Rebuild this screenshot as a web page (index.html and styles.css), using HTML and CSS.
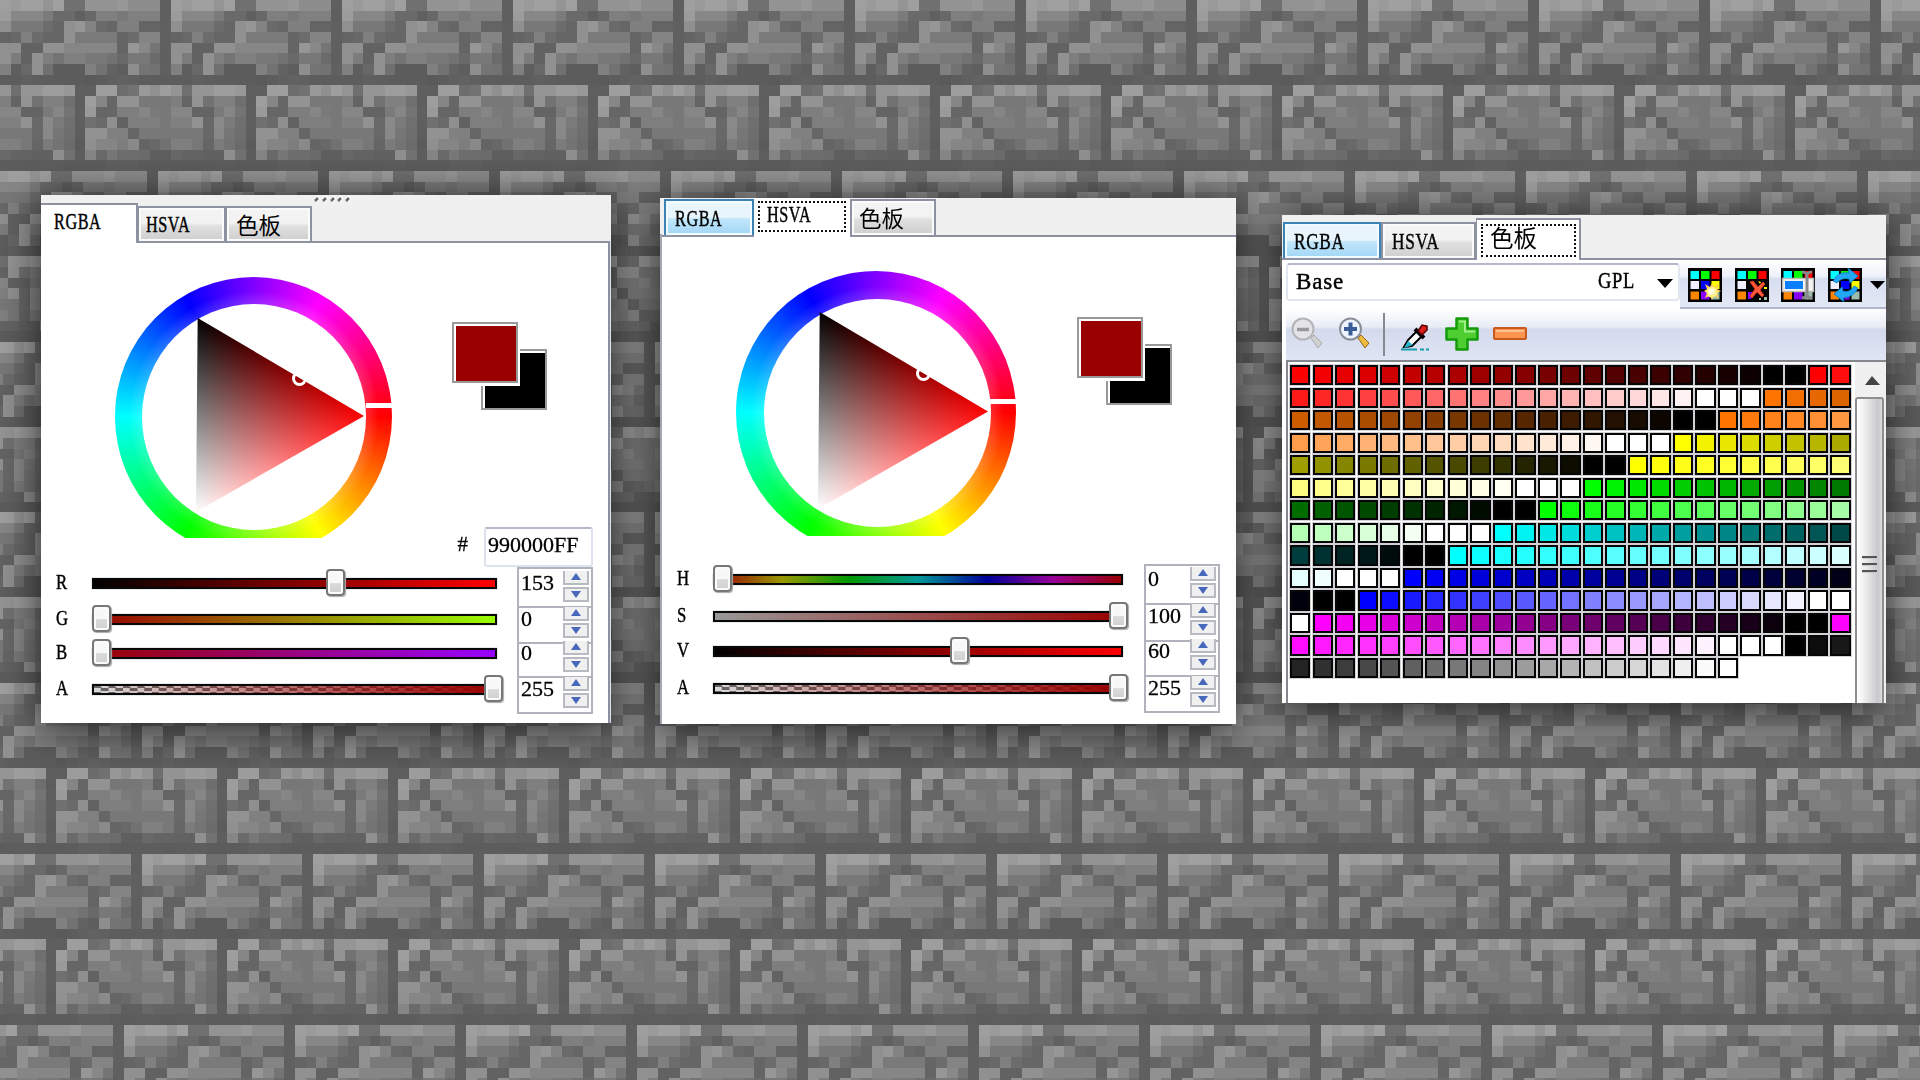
FILE: index.html
```html
<!DOCTYPE html>
<html lang="zh">
<head>
<meta charset="utf-8">
<title>RGBA / HSVA / 色板</title>
<link rel="stylesheet" href="styles.css">
</head>
<body>
<canvas class="wall" width="1920" height="1080"></canvas>

<section class="panel panel-rgba">
  <nav class="tabs">
    <div class="tab active first"><span class="latin">RGBA</span></div>
    <div class="tab"><span class="latin">HSVA</span></div>
    <div class="tab last"><span class="cjk">色板</span></div>
    <svg class="grip" width="38" height="8" viewBox="0 0 38 8"><path d="M2 5l3-3M10 5l3-3M18 5l3-3M25 5l3-3M33 5l3-3" stroke="#fff" stroke-width="4"/><path d="M1 6l3-3M9 6l3-3M17 6l3-3M24 6l3-3M32 6l3-3" stroke="#666" stroke-width="2.500"/></svg>
  </nav>
  <div class="stage">
    <div class="wheel"><div class="ring"></div><div class="hole"></div><div class="triangle"></div><div class="bar"></div><div class="marker"></div></div>
    <div class="side">
      <div class="pair"><div class="sw back"></div><div class="sw front"></div></div>
      <div class="hex"><span class="num hash">#</span><div class="field"><span class="num">990000FF</span></div></div>
    </div>
  </div>
  <div class="rows">
    <div class="row r1"><span class="name">R</span><div class="slider"><div class="track t-red"></div><i class="thumb" style="left:234px"></i></div><div class="spin"><span class="num">153</span><div class="btns"><b></b><b class="dn"></b></div></div></div>
    <div class="row r2"><span class="name">G</span><div class="slider"><div class="track t-green"></div><i class="thumb" style="left:0"></i></div><div class="spin"><span class="num">0</span><div class="btns"><b></b><b class="dn"></b></div></div></div>
    <div class="row r3"><span class="name">B</span><div class="slider"><div class="track t-blue"></div><i class="thumb" style="left:0"></i></div><div class="spin"><span class="num">0</span><div class="btns"><b></b><b class="dn"></b></div></div></div>
    <div class="row r4"><span class="name">A</span><div class="slider"><div class="track t-alpha"></div><i class="thumb" style="left:392px"></i></div><div class="spin"><span class="num">255</span><div class="btns"><b></b><b class="dn"></b></div></div></div>
  </div>
</section>

<section class="panel panel-hsva">
  <nav class="tabs">
    <div class="tab hot"><span class="latin">RGBA</span></div>
    <div class="tab active"><div class="focus"><span class="latin">HSVA</span></div></div>
    <div class="tab last"><span class="cjk">色板</span></div>
  </nav>
  <div class="stage">
    <div class="wheel"><div class="ring"></div><div class="hole"></div><div class="triangle"></div><div class="bar"></div><div class="marker"></div></div>
    <div class="side">
      <div class="pair"><div class="sw back"></div><div class="sw front"></div></div>
    </div>
  </div>
  <div class="rows">
    <div class="row r1"><span class="name">H</span><div class="slider"><div class="track t-hue"></div><i class="thumb" style="left:0"></i></div><div class="spin"><span class="num">0</span><div class="btns"><b></b><b class="dn"></b></div></div></div>
    <div class="row r2"><span class="name">S</span><div class="slider"><div class="track t-sat"></div><i class="thumb" style="left:396px"></i></div><div class="spin"><span class="num">100</span><div class="btns"><b></b><b class="dn"></b></div></div></div>
    <div class="row r3"><span class="name">V</span><div class="slider"><div class="track t-red"></div><i class="thumb" style="left:237px"></i></div><div class="spin"><span class="num">60</span><div class="btns"><b></b><b class="dn"></b></div></div></div>
    <div class="row r4"><span class="name">A</span><div class="slider"><div class="track t-alpha"></div><i class="thumb" style="left:396px"></i></div><div class="spin"><span class="num">255</span><div class="btns"><b></b><b class="dn"></b></div></div></div>
  </div>
</section>

<section class="panel panel-palette">
  <nav class="tabs">
    <div class="tab hot"><span class="latin">RGBA</span></div>
    <div class="tab"><span class="latin">HSVA</span></div>
    <div class="tab active"><div class="focus"><span class="cjk">色板</span></div></div>
  </nav>
  <svg width="0" height="0" class="defs">
    <defs>
      <g id="grid">
        <rect width="34" height="34" fill="#000"/>
        <rect x="2.500" y="3" width="8.500" height="8" fill="#0ff"/><rect x="13" y="3" width="8.500" height="8" fill="#0f0"/><rect x="23.500" y="3" width="8" height="8" fill="#f00"/>
        <rect x="2.500" y="13" width="8.500" height="8" fill="#eef"/><rect x="13" y="13" width="8.500" height="8" fill="#00f"/><rect x="23.500" y="13" width="8" height="8" fill="#ff0"/>
        <rect x="2.500" y="23.500" width="8.500" height="8" fill="#ff8400"/><rect x="13" y="23.500" width="8.500" height="8" fill="#80f"/><rect x="23.500" y="23.500" width="8" height="8" fill="#9cbcae"/>
      </g>
    </defs>
  </svg>
  <div class="picker">
    <div class="combo"><span class="base">Base</span><span class="latin gpl">GPL</span><svg width="16" height="9" viewBox="0 0 16 9"><path d="M0 0h16L8 9z"/></svg></div>
    <div class="actions">
      <svg width="34" height="34" viewBox="0 0 34 34"><use href="#grid"/><path d="M24 15l2 4 5-3-2 5 4 2-4 2 2 5-5-2-2 4-2-4-5 2 2-5-3-2 3-2-2-5 5 3z" fill="#fc5"/><circle cx="24" cy="24" r="5.500" fill="#fff08a"/><circle cx="23.500" cy="23.500" r="3" fill="#fffde0"/></svg>
      <svg width="34" height="34" viewBox="0 0 34 34"><use href="#grid"/><path d="M13 12h19v21H13z"/><path d="M23 13l3 1-1 2zM29 19h3v2h-3z" fill="#ff0"/><path d="M24 30h2v2h-2zM29 29h3v3h-3z" fill="#9cbcae"/><path d="M13 24l4 0-1 7h-3z" fill="#80f"/><path d="M15 14l3-1 5 6 5-5 2 2-5 6 4 5-2 2-5-5-5 6-2-2 5-7z" fill="#ff5a3c" stroke="#d03018"/></svg>
      <svg width="34" height="34" viewBox="0 0 34 34"><use href="#grid"/><path d="M1.500 10.500h31v13h-31z" fill="#f4f4f4" stroke="#bbb" stroke-width="1.500"/><path d="M4 13h18v8H4z" fill="#0a80ff"/><path d="M21 4q3.500 0 5 2 1.500-2 5-2M26 6v22M21 30q3.500 0 5-2 1.500 2 5 2" fill="none" stroke="#888" stroke-width="3"/></svg>
      <svg width="34" height="34" viewBox="0 0 34 34"><use href="#grid"/><path d="M5 13Q10 3 21 5l-1-5 10 8-8 7-1-4q-7-2-12 4zM30 20q-4 9-15 10l1 4-10-8 8-7 1 4q7 2 11-5z" fill="#22a8f4" stroke="#087ac4" stroke-width=".8"/></svg>
      <svg class="drop" width="15" height="8" viewBox="0 0 15 8"><path d="M0 0h15L7.500 8z"/></svg>
    </div>
  </div>
  <div class="toolbar">
    <svg class="i1" width="32" height="32" viewBox="0 0 32 32"><path d="M20 21l3-3 8 8-4 5z" fill="#d0d0d0" stroke="#aaa"/><circle cx="12" cy="12" r="10.500" fill="#e4e4e8" stroke="#b4b4b8" stroke-width="2"/><path d="M6 12.500h12" stroke="#999" stroke-width="3.500"/></svg>
    <svg class="i2" width="32" height="32" viewBox="0 0 32 32"><path d="M20 21l3-3 8 8-4 5z" fill="#edbd3c" stroke="#98661c"/><circle cx="12.500" cy="12" r="10.500" fill="#eef4ff" stroke="#8a8e96" stroke-width="2"/><path d="M6 12h13M12.500 5.500v13" stroke="#3c5c98" stroke-width="4"/></svg>
    <div class="sep"></div>
    <svg class="i3" width="30" height="28" viewBox="0 0 30 28"><path d="M3 24L7 17 16 8l5 5-10 10z" fill="#fff" stroke="#000" stroke-width="2"/><path d="M3 25l4-7 5 4z" fill="#28b4cc"/><path d="M14 6l9 9" stroke="#000" stroke-width="4"/><path d="M17 8l4-6 5 1 0 4-5 5z" fill="#d91c1c" stroke="#500" stroke-width="1.500"/><path d="M0 26.500h16M19 26.500h4M25 26.500h3" stroke="#189cae" stroke-width="2"/></svg>
    <svg class="i4" width="34" height="34" viewBox="0 0 34 34"><path d="M11.500 1.500h11v10h10v11h-10v10h-11v-10h-10v-11h10z" fill="#4fce32" stroke="#159a0c" stroke-width="2.500" stroke-linejoin="round"/><path d="M14 4.500h6v10h10" fill="none" stroke="#a0ee88" stroke-width="2"/></svg>
    <svg class="i5" width="34" height="13" viewBox="0 0 34 13"><rect x="1" y="1" width="32" height="11" rx="1" fill="#ff9350" stroke="#c55a1c" stroke-width="2"/><path d="M3 4h28" stroke="#ffc090" stroke-width="2"/></svg>
  </div>
  <div class="list">
    <div class="cells"></div>
    <div class="scroll">
      <svg width="15" height="9" viewBox="0 0 15 9"><path d="M0 9l7-9 8 9z" fill="#444"/></svg>
      <div class="sthumb"><i></i><i></i><i></i></div>
    </div>
  </div>
</section>
<script src="main.js"></script>
</body>
</html>
```
FILE: styles.css
```css
* { box-sizing: border-box; }
body { margin: 0; width: 1920px; height: 1080px; overflow: hidden; position: relative; background: #6b6b6b; font-family: "Liberation Serif", "Noto Sans CJK SC", serif; color: #000; }
.wall { display: block; }
.defs { position: absolute; }

/* floating windows */
.panel { position: absolute; background: #fff; box-shadow: 0 5px 40px rgba(0,0,0,.7); }
.panel-rgba { left: 41px; top: 195px; width: 570px; height: 528px; }
.panel-hsva { left: 660px; top: 198px; width: 576px; height: 526px; }
.panel-palette { left: 1282px; top: 215px; width: 604px; height: 488px; }
.panel-rgba::after { content: ""; position: absolute; right: 0; top: 46px; bottom: 0; width: 3px; background: linear-gradient(90deg, #8e92a0 66%, #dde2ec 66%); }
.panel-hsva::after { content: ""; position: absolute; left: 0; top: 36px; bottom: 0; width: 2px; background: #a4a8b4; }

/* text */
.latin, .name, .num, .base { display: inline-block; white-space: nowrap; line-height: 1; transform-origin: 0 50%; -webkit-text-stroke: .45px #000; }
.latin { font-size: 22.5px; letter-spacing: .8px; transform: scaleX(.72); width: 46px; }
.cjk { font: 22.5px/1 "Noto Sans CJK SC", sans-serif; white-space: nowrap; }
.name { font-size: 22px; transform: scaleX(.76); width: 14px; }
.num { font-size: 22px; -webkit-text-stroke-width: .3px; }
.base { font-size: 23px; letter-spacing: .8px; }

/* tabs */
.tabs { display: flex; align-items: flex-end; background: #f0f0f0; border-bottom: 2px solid #8e92a0; }
.tab { border: 2px solid #8e92a0; border-bottom: 0; background: linear-gradient(#f3f3f3 0 45%, #dfdfdf 55%, #cecece); box-shadow: inset 0 0 0 2px #fbfbfb; }
.tab.hot { background: linear-gradient(#e8f5fd 0 48%, #c2e6fa 52%, #a0d6f6); border-color: #3c82b4; box-shadow: inset 0 0 0 2px #f2fbff; }
.tab.active { background: #fff; box-shadow: none; margin-bottom: -2px; }
.focus { border: 2px dotted #111; }

.panel-rgba .tabs { height: 48px; position: relative; }
.panel-rgba .tab { width: 89px; height: 35px; padding: 6px 0 0 7px; margin-left: -1px; }
.panel-rgba .tab.first { width: 97px; height: 40px; border-left: 0; padding: 6px 0 0 13px; margin-left: 0; }
.panel-rgba .tab.last { width: 87px; padding: 5px 0 0 9px; }
.panel-rgba .cjk, .panel-hsva .cjk { display: block; }
.grip { position: absolute; left: 273px; top: 0; }

.panel-hsva .tabs { height: 39px; padding-left: 4px; }
.panel-hsva .tab { width: 90px; height: 36px; padding: 7px 0 0 9px; }
.panel-hsva .tab.active { width: 96px; height: 39px; border: 0; padding: 3px 4px 0 4px; }
.panel-hsva .focus { width: 88px; height: 31px; padding: 1px 0 0 7px; }
.panel-hsva .tab.last { width: 86px; padding: 5px 0 0 7px; }

.panel-palette .tabs { height: 45px; padding-left: 1px; }
.panel-palette .latin { transform: scaleX(.77); }
.panel-palette .tab { width: 98px; height: 36px; padding: 7px 0 0 9px; }
.panel-palette .tab:nth-child(2) { width: 95px; padding-left: 9px; }
.panel-palette .tab.active { width: 105px; height: 42px; border-left-width: 1px; padding: 4px 0 0 4px; }
.panel-palette .focus { width: 95px; height: 33px; padding: 0 0 0 7px; line-height: 23px; }
.panel-palette .cjk { font-size: 23.5px; }

/* colour wheel */
.stage { display: flex; }
.panel-rgba .stage { height: 324px; padding: 34px 0 0 74px; --rw: 277px; --rh: 279px; --hx: 27px; --hy: 27px; --hw: 224px; --hh: 226px; --tx: 81px; --ty: 41px; --tw: 168px; --th: 194px; --mx: 177px; --my: 94px; --bx: 251px; --by: 126px; }
.panel-hsva .stage { height: 327px; padding: 34px 0 0 76px; --rw: 280px; --rh: 283px; --hx: 27.5px; --hy: 28px; --hw: 227px; --hh: 228px; --tx: 82px; --ty: 41px; --tw: 170px; --th: 197px; --mx: 180px; --my: 95px; --bx: 254px; --by: 128px; }
.wheel { position: relative; overflow: hidden; width: var(--rw); flex: none; }
.panel-rgba .wheel { height: 261px; }
.panel-hsva .wheel { height: 265px; }
.ring { width: var(--rw); height: var(--rh); border-radius: 50%; background: conic-gradient(from 90deg, red, #ff0, lime, cyan, blue, #f0f, red); }
.hole { position: absolute; left: var(--hx); top: var(--hy); width: var(--hw); height: var(--hh); border-radius: 50%; background: #fff; }
.ring::after { content: ""; position: absolute; left: calc(var(--hx) - 13px); top: calc(var(--hy) - 13px); width: calc(var(--hw) + 26px); height: calc(var(--hh) + 26px); border-radius: 50%; background: radial-gradient(closest-side, rgba(255,255,255,.18) 88%, rgba(255,255,255,0)); }
.triangle { position: absolute; left: var(--tx); top: var(--ty); width: var(--tw); height: var(--th); clip-path: polygon(1% 0, 100% 50.5%, 0 100%); background: linear-gradient(150deg, #000, #f00 67%), linear-gradient(210deg, #000 33%, #0ff); background-blend-mode: screen; }
.marker { position: absolute; left: var(--mx); top: var(--my); width: 15px; height: 15px; border: 3px solid #fff; border-radius: 50%; }
.bar { position: absolute; left: var(--bx); top: var(--by); width: 27px; height: 5px; background: #fff; }

/* swatches and hex value */
.side { display: flex; flex-direction: column; flex: 1; }
.panel-rgba .side { padding: 45px 18px 0 60px; }
.panel-hsva .side { padding: 46px 0 0 61px; }
.pair { position: relative; width: 95px; height: 88px; }
.sw { position: absolute; width: 66px; height: 61px; border: 2px solid #999; padding: 2px 0 0 2px; background-clip: content-box; }
.front { left: 0; top: 0; background-color: #900; box-shadow: inset 2px 2px 0 #fff, 2px 3px 0 #fff; }
.back { left: 29px; top: 27px; background-color: #000; }
.hex { display: flex; justify-content: flex-end; gap: 16px; margin-top: auto; }
.hash { margin-top: 7px; font-size: 21px; }
.field { width: 109px; height: 40px; border: 2px solid #dde3ee; border-top-color: #b4b8c4; border-radius: 3px; padding: 5px 0 0 2px; }

/* channel rows */
.row { display: flex; align-items: flex-start; }
.panel-rgba .row { padding-left: 15px; }
.panel-hsva .row { padding-left: 17px; }
.name { margin: calc(var(--c) - 12px) 22px 0 0; }
.slider { position: relative; margin-top: calc(var(--c) - 5px); height: 10px; }
.panel-rgba .slider { width: 405px; margin-right: 20px; }
.panel-hsva .slider { width: 410px; margin-right: 21px; }
.r1 { --c: 16px; --h: 39px; }
.r2 { --c: 13px; --h: 36px; }
.r3 { --c: 11px; --h: 34px; }
.r4 { --c: 13px; --h: 37px; }
.panel-hsva .r1 { --c: 15px; }
.panel-hsva .r2 { --c: 13px; --h: 37px; }
.panel-hsva .r3 { --h: 35px; }
.panel-hsva .rows { padding-top: 0; }
.track { height: 11px; border: 2.5px solid #080808; box-shadow: 0 0 1px #789; background-origin: border-box; }
.thumb { position: absolute; top: -9px; width: 19px; height: 27px; border: 2px solid #777; border-radius: 4px; background: linear-gradient(#f8f8f8 0 50%, #dadada 55%, #d0d0d0); box-shadow: inset 0 0 0 2px #fbfbfb, 1px 1px 1px #aaa; }
.t-red { background-image: linear-gradient(90deg, #000, #f00); }
.t-green { background-image: linear-gradient(90deg, #900, #9f0); }
.t-blue { background-image: linear-gradient(90deg, #900, #90f); }
.t-sat { background-image: linear-gradient(90deg, #999, #900); }
.t-hue { background-image: linear-gradient(90deg, #900, #990 17%, #090 33%, #099 50%, #009 67%, #909 83%, #900); }
.t-alpha { background: linear-gradient(90deg, rgba(153,0,0,0), #900), conic-gradient(#666 25%, #d8d8d8 0 50%, #666 0 75%, #d8d8d8 0) 0 2px / 14.500px 7px; }
.spin { display: flex; justify-content: space-between; width: 76px; height: var(--h); border: 2px solid #b0b2bc; border-bottom: 0; padding: 0 2px 0 2px; }
.r4 .spin { border-bottom: 2px solid #b0b2bc; height: 38px; }
.spin .num { margin-top: calc(var(--c) - 13.5px); }
.btns { margin-top: calc(var(--c) - 14px); width: 26px; height: 31px; display: flex; flex-direction: column; gap: 2px; }
.btns b { flex: 1; border: 2px solid #b8bac2; border-top: 0; background: #f0f0f0; display: flex; align-items: center; justify-content: center; }
.btns .dn { border-top: 2px solid #b8bac2; }
.btns b::after { content: ""; border: 5px solid transparent; border-top: 0; border-bottom: 7px solid #4868bc; }
.btns .dn::after { transform: rotate(180deg); }

/* palette picker */
.picker { display: flex; height: 49px; }
.combo { width: 395px; height: 38px; margin: 3px 0 0 4px; border: 2px solid #e2e6ef; border-top-color: #b4b8c8; border-radius: 4px; display: flex; align-items: center; padding: 0 5px 1px 8px; }
.combo .gpl { margin-left: auto; width: 46px; transform: scaleX(.82); margin-right: 13px; }
.combo svg { margin-top: 4px; }
.actions { flex: 1; display: flex; gap: 12.500px; padding: 8px 1px 0 8px; background: linear-gradient(#fff, #eef1f8 35%, #d7def0 40%, #e3e8f5); border-bottom: 2px solid #b2b6cc; }
.actions svg { flex: none; }
.drop { margin: 13px 0 0 -4px; }
.toolbar { display: flex; height: 51px; margin-left: 4px; background: linear-gradient(#fff, #e8ecf5 35%, #d3daec 40%, #e0e5f4); }
.i1 { margin: 8px 0 0 5px; }
.i2 { margin: 8px 0 0 15px; }
.sep { width: 2px; height: 43px; margin: 4px 16px 0 13px; background: #888a92; }
.i3 { margin-top: 14px; }
.i4 { margin: 8px 0 0 14px; }
.i5 { margin: 18px 0 0 14px; }
.list { display: flex; height: 343px; margin-left: 4px; border: 2px solid #85878c; border-right: 0; border-bottom: 0; }
.cells { display: grid; grid-template-columns: repeat(25, 20.400px); grid-auto-rows: 20.400px; gap: 2.130px; align-content: start; padding: 3px 0 0 2px; width: 567px; }
.cells i { border: 2.500px solid #060606; box-shadow: 0 0 0 1px #d2d2d6; }
.scroll { width: 31px; background: #f0f0f0; display: flex; flex-direction: column; }
.scroll svg { margin: 14px 0 0 10px; flex: none; }
.sthumb { flex: 1; margin: 12px 2px 0 0; border: 2px solid #8e8e92; border-bottom: 0; border-radius: 3px 3px 0 0; background: linear-gradient(90deg, #fff, #eee 30%, #c8c8cc 85%, #ddd); display: flex; flex-direction: column; gap: 4px; padding: 157px 0 0 5px; }
.sthumb i { width: 15px; height: 3px; background: #555; border-bottom: 1px solid #ccc; }
```
FILE: main.js
```js
// Stone brick texture: 16 x 16 grey levels, two hex digits each.
const stone = [
  "9f9aa0a0949f7070939393988d8d8d5f",
  "9c8787877b6a6a60687f7f798080805f",
  "907878786c669096836a667f7f646460",
  "6468806c6666917a7a7a7a656c848460",
  "90906262919186868686866496887560",
  "917c62917e7480807878726978786b5f",
  "805e6891705c5c5c8072625e8e747260",
  "5d5d605e5d5c5c5c5a5d6062605d5d5d",
  "946f95959d9d985f5f9e9e6d7299909e",
  "7e64937280806f5e9e86669393787878",
  "868664647a86745f9a66667e7e867a78",
  "80809268897a6f5f706a8f627e7e7e78",
  "7878786888766e5e9292808066787878",
  "808078667c746c5c9086867e8a656972",
  "686464626290725e866a786e6e6c5f5f",
  "5d5d5c5d5e5e5c5c5c5d6060605d5c5d"
];

const ctx = document.querySelector(".wall").getContext("2d");
const S = 171;
const edge = i => Math.round(i * S / 16 - 0.1);
const shifts = [0, -13, -29, -29, -29, -29, -47];
shifts.forEach((dx, n) => {
  const y0 = Math.round(n * 170.8);
  for (let x0 = dx; x0 < 1920; x0 += S) {
    for (let r = 0; r < 16; r++) {
      for (let c = 0; c < 16; c++) {
        const v = stone[r].substr(c * 2, 2);
        ctx.fillStyle = "#" + v + v + v;
        ctx.fillRect(x0 + edge(c), y0 + edge(r), edge(c + 1) - edge(c), edge(r + 1) - edge(r));
      }
    }
  }
});

// Palette: each hue fades to black, then to white; greys close the list.
const cells = document.querySelector(".cells");
function add(rgb) {
  const el = document.createElement("i");
  el.style.background = "rgb(" + rgb.map(Math.round).join(",") + ")";
  cells.appendChild(el);
}
const hues = [[255, 0, 0], [255, 115, 0], [255, 255, 0], [0, 255, 0], [0, 255, 255], [0, 0, 255], [255, 0, 255]];
for (const h of hues) {
  for (let i = 0; i < 23; i++) add(h.map(v => v * Math.max(0, 1 - i / 21)));
  for (let i = 0; i < 23; i++) add(h.map(v => v + (255 - v) * Math.min(1, i / 20)));
}
for (let i = 0; i < 23; i++) {
  const g = Math.min(255, 255 * i / 21.3);
  add([g, g, g]);
}
```
